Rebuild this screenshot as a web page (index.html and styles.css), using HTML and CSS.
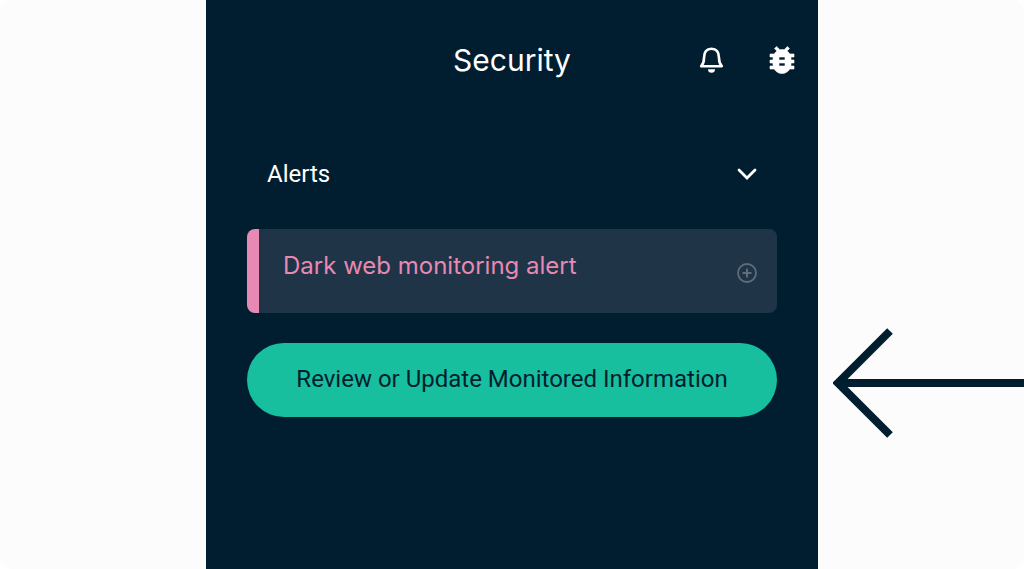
FILE: index.html
```html
<!DOCTYPE html>
<html lang="en">
<head>
  <meta charset="utf-8">
  <title>Security</title>
  <link rel="stylesheet" href="styles.css">
</head>
<body>
  <div class="page">
    <main class="panel">
      <header class="header">
        <h1 class="title">Security</h1>
        <div class="header-icons">
          <button class="icon-button" type="button" aria-label="Notifications">
            <svg width="36" height="36" viewBox="0 0 36 36" fill="none" stroke="#fff" stroke-width="2.600">
              <path d="M8.200 24.200c2.200-2.200 2.800-4.500 2.800-8.200 0-5.500 2.500-9.200 7.500-9.200s7.500 3.700 7.500 9.200c0 3.700.6 6 2.800 8.200z" stroke-linejoin="round" />
              <path d="M15 27.200h7a3.500 3.500 0 0 1-7 0z" fill="#fff" stroke="none" />
            </svg>
          </button>
          <button class="icon-button" type="button" aria-label="Report a bug">
            <svg width="36" height="36" viewBox="0 0 24 24" fill="#fff">
              <path d="M20 8h-2.810a5.985 5.985 0 0 0-1.820-1.960L17 4.410 15.590 3l-2.170 2.170a6.002 6.002 0 0 0-2.830 0L8.410 3 7 4.410l1.620 1.630C7.880 6.550 7.260 7.220 6.810 8H4v2h2.090c-.05.33-.09.66-.09 1v1H4v2h2v1c0 .34.04.67.09 1H4v2h2.810c1.040 1.790 2.970 3 5.190 3s4.150-1.210 5.190-3H20v-2h-2.090c.05-.33.09-.66.09-1v-1h2v-2h-2v-1c0-.34-.04-.67-.09-1H20V8zm-6 8h-4v-2h4v2zm0-4h-4v-2h4v2z" stroke="#fff" stroke-width=".4" />
            </svg>
          </button>
        </div>
      </header>

      <section class="content">
        <button class="alerts-toggle" type="button" aria-expanded="true">
          <span>Alerts</span>
          <svg width="20" height="20" viewBox="0 0 20 20" fill="none" stroke="#fff" stroke-width="2.800">
            <path d="M2 6l8 8 8-8" stroke-linecap="round" />
          </svg>
        </button>

        <div class="alert">
          <h2 class="alert-title">Dark web monitoring alert</h2>
          <button class="icon-button" type="button" aria-label="Show alert">
            <svg width="20" height="20" viewBox="0 0 20 20" fill="none" stroke="#5e6d79">
              <circle cx="10" cy="10" r="9" stroke-width="1.800" />
              <path d="M10 5.500v9M5.500 10h9" stroke-width="2" />
            </svg>
          </button>
        </div>

        <button class="review-button" type="button">Review or Update Monitored Information</button>
      </section>
    </main>

    <!-- arrow pointing at the review button -->
    <div class="arrow">
      <svg width="60" height="112" viewBox="0 0 60 112" fill="none" stroke="#001e2f" stroke-width="8">
        <path d="M57 4L5 56l52 52M5 56h55" />
      </svg>
      <div class="arrow-line"></div>
    </div>
  </div>
</body>
</html>
```
FILE: styles.css
```css
html {
  background-color: #fff;
}

body {
  margin: 0;
  font-family: Roboto, Arial, sans-serif;
}

button {
  margin: 0;
  padding: 0;
  border: none;
  background: none;
  font: inherit;
  color: inherit;
  cursor: pointer;
}

svg {
  display: block;
  flex-shrink: 0;
}

.page {
  display: grid;
  grid-template-columns: 1fr minmax(0, 612px) 1fr;
  min-height: 100vh;
  background-color: #fcfcfc;
  border-radius: 12px;
  overflow: hidden;
}

.panel {
  grid-column: 2;
  background-color: #001e2f;
  color: #fff;
}

.header {
  display: grid;
  grid-template-columns: 1fr auto 1fr;
  align-items: center;
  height: 120px;
  padding: 0 18px;
}

.title {
  grid-column: 2;
  margin: 0;
  font-family: Inter, Arial, sans-serif;
  font-size: 30px;
  font-weight: 400;
}

.header-icons {
  display: flex;
  justify-content: flex-end;
  gap: 35px;
}

.content {
  padding: 24px 41px;
}

.alerts-toggle {
  display: flex;
  justify-content: space-between;
  align-items: center;
  width: 100%;
  height: 60px;
  padding: 0 20px;
  font-size: 24px;
}

.alert {
  display: flex;
  justify-content: space-between;
  align-items: center;
  margin-top: 25px;
  height: 84px;
  padding: 4px 20px 0 24px;
  box-sizing: border-box;
  border-left: 12px solid #e889b3;
  border-radius: 8px;
  background-color: #1f3447;
}

.alert-title {
  align-self: flex-start;
  margin: 16px 0 0;
  font-family: Inter, Arial, sans-serif;
  font-size: 24px;
  line-height: 34px;
  font-weight: 400;
  color: #e889b3;
}

.review-button {
  display: block;
  width: 100%;
  margin-top: 30px;
  padding: 19px 20px 21px;
  border-radius: 40px;
  background-color: #17bf9e;
  font-size: 24px;
  line-height: 34px;
  color: #001e2f;
}

.arrow {
  display: flex;
  align-items: center;
  align-self: start;
  margin-top: 327px;
  padding-left: 15px;
}

.arrow-line {
  flex: 1;
  height: 8px;
  background-color: #001e2f;
}
```
